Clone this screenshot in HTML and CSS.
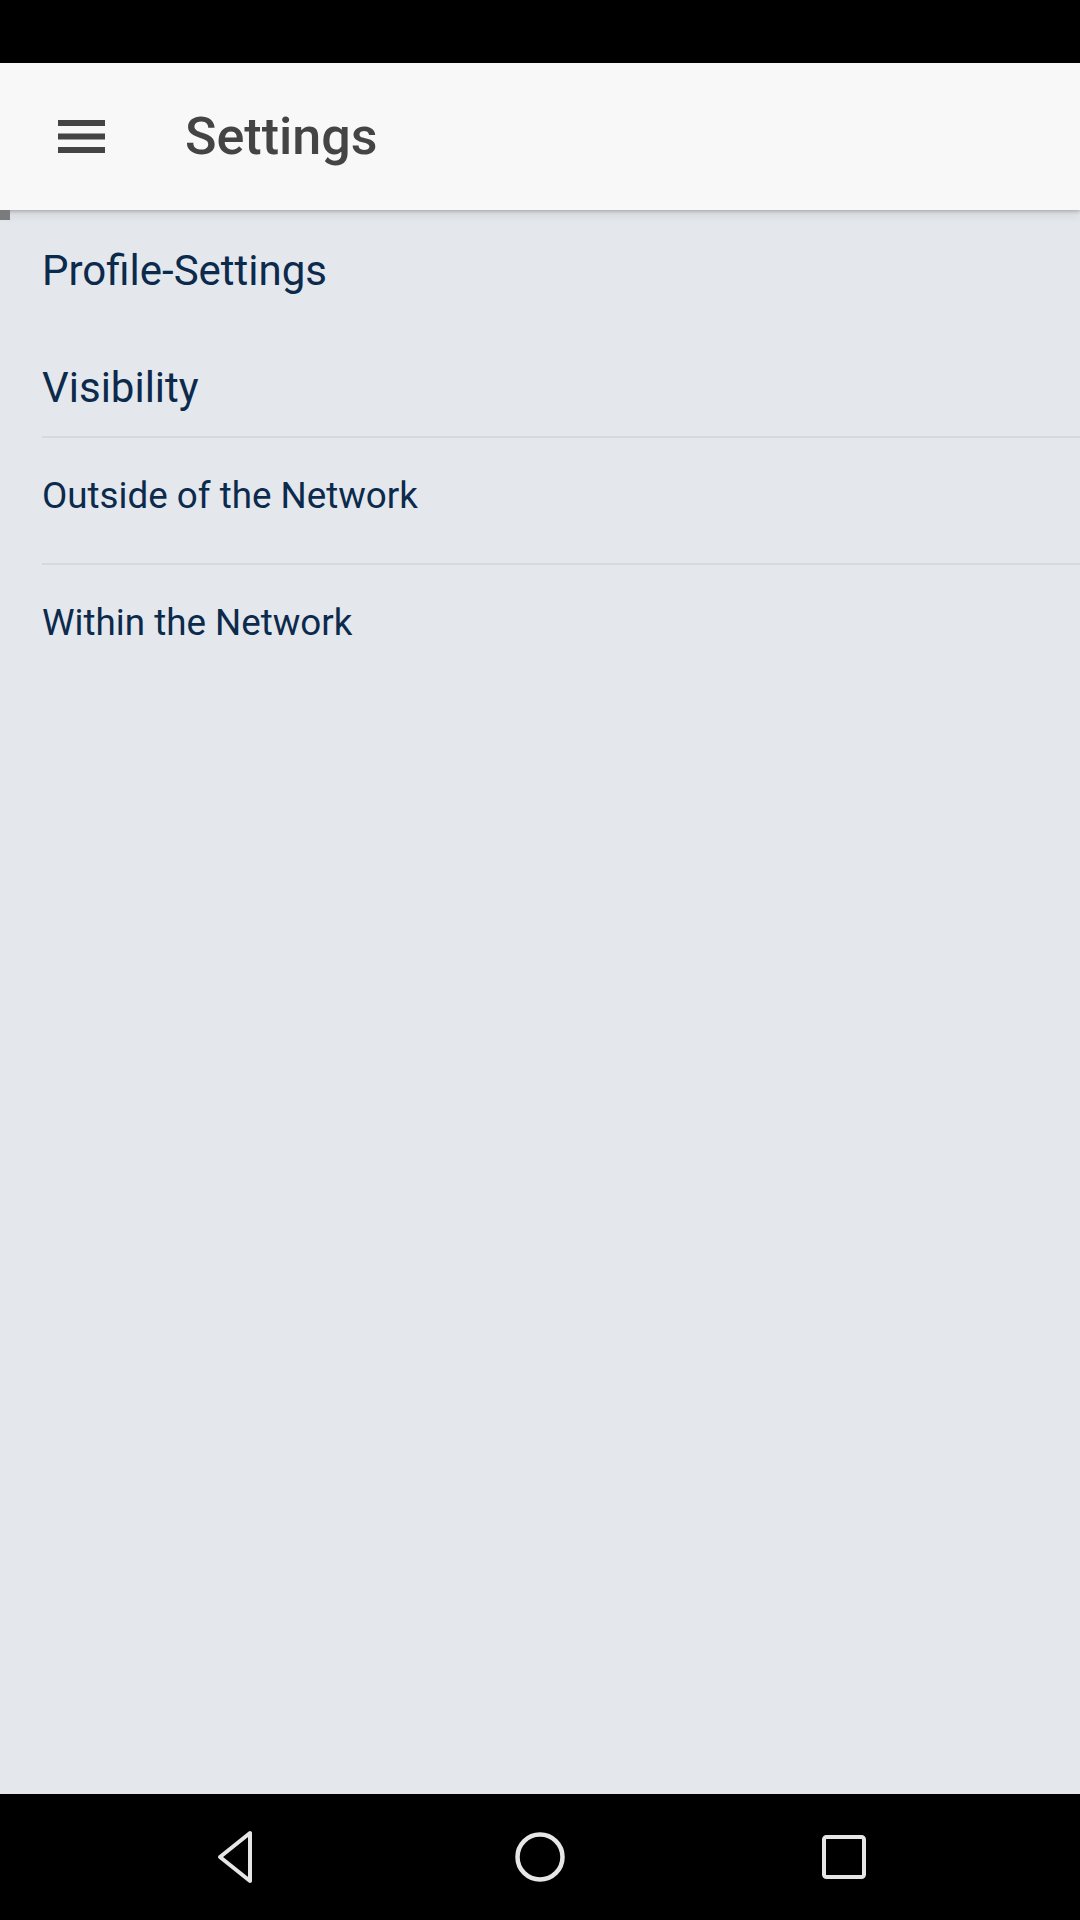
FILE: index.html
```html
<!DOCTYPE html>
<html>
<head>
<meta charset="utf-8">
<link rel="stylesheet" href="styles.css">
</head>
<body>
<div class="screen">
  <div class="status-bar"></div>
  <header class="app-bar">
    <svg class="menu-icon" width="47" height="33" viewBox="0 0 47 33">
      <rect x="0" y="0" width="47" height="6" fill="#444"/>
      <rect x="0" y="13.5" width="47" height="6" fill="#444"/>
      <rect x="0" y="27" width="47" height="6" fill="#444"/>
    </svg>
    <h1 class="title">Settings</h1>
  </header>
  <main class="content">
    <div class="scroll-marker"></div>
    <div class="section-title">Profile-Settings</div>
    <div class="section-title section-title--tight">Visibility</div>
    <div class="item-list">
      <div class="item">Outside of the Network</div>
      <div class="item">Within the Network</div>
    </div>
  </main>
  <nav class="nav-bar">
    <div class="nav-slot">
      <svg width="48" height="56" viewBox="0 0 48 56">
        <path d="M38 4 L38 52 L8 28 Z" fill="none" stroke="#e6e6e6" stroke-width="4" stroke-linejoin="round"/>
      </svg>
    </div>
    <div class="nav-slot">
      <svg width="54" height="54" viewBox="0 0 54 54">
        <circle cx="27" cy="27" r="22.5" fill="none" stroke="#e6e6e6" stroke-width="4.5"/>
      </svg>
    </div>
    <div class="nav-slot">
      <svg width="48" height="48" viewBox="0 0 48 48">
        <rect x="4" y="4" width="40" height="40" rx="2.5" fill="none" stroke="#e6e6e6" stroke-width="4"/>
      </svg>
    </div>
  </nav>
</div>
</body>
</html>
```

FILE: styles.css
```css
html, body {
  margin: 0;
  padding: 0;
}

body {
  font-family: Roboto, "Noto Sans", "Liberation Sans", sans-serif;
  background: #000;
}

.screen {
  width: 1080px;
  height: 1920px;
  display: flex;
  flex-direction: column;
  overflow: hidden;
}

.status-bar {
  height: 63px;
  background: #000;
  flex: none;
}

.app-bar {
  height: 147px;
  flex: none;
  background: #f8f8f8;
  display: flex;
  align-items: center;
  padding-left: 58px;
  box-sizing: border-box;
  position: relative;
  z-index: 2;
  box-shadow: 0 2px 3px rgba(0, 0, 0, 0.18), 0 6px 10px rgba(0, 0, 0, 0.07);
}

.menu-icon {
  display: block;
  flex: none;
}

.title {
  margin: 0 0 0 80px;
  font-size: 52px;
  font-weight: 500;
  color: #444444;
  line-height: 61px;
}

.content {
  flex: 1;
  background: #e4e7ec;
  position: relative;
}

.scroll-marker {
  position: absolute;
  left: 0;
  top: 0;
  width: 10px;
  height: 10px;
  background: #7a7b7d;
  z-index: 3;
}

.section-title {
  padding: 33px 42px 28px;
  font-size: 42px;
  line-height: 56px;
  color: #0b2a4c;
}

.section-title--tight {
  padding-bottom: 20px;
}

.item-list {
  margin-left: 42px;
}

.item {
  border-top: 2px solid #d8d9dc;
  padding: 33px 0 42px;
  font-size: 36.75px;
  line-height: 50px;
  color: #0b2a4c;
}

.nav-bar {
  height: 126px;
  flex: none;
  background: #000;
  display: flex;
  justify-content: center;
  align-items: center;
}

.nav-slot {
  width: 304px;
  display: flex;
  justify-content: center;
  align-items: center;
}

.nav-slot svg {
  display: block;
}
```
